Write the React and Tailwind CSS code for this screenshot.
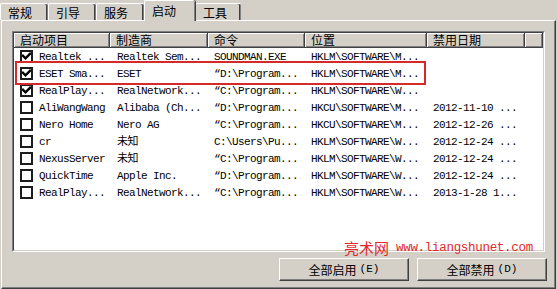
import React from "react";

const cjk = { fontFamily: "'Noto Sans CJK SC', 'Noto Sans', sans-serif" };
const mono = { fontFamily: "'Liberation Mono', 'Noto Sans CJK SC', monospace" };

const rows = [
  [true, "Realtek ...", "Realtek Sem...", "SOUNDMAN.EXE", "HKLM\\SOFTWARE\\M...", ""],
  [true, "ESET Sma...", "ESET", "\u201CD:\\Program...", "HKLM\\SOFTWARE\\M...", ""],
  [true, "RealPlay...", "RealNetwork...", "\u201CC:\\Program...", "HKLM\\SOFTWARE\\W...", ""],
  [false, "AliWangWang", "Alibaba (Ch...", "\u201CD:\\Program...", "HKCU\\SOFTWARE\\M...", "2012-11-10 ..."],
  [false, "Nero Home", "Nero AG", "\u201CC:\\Program...", "HKCU\\SOFTWARE\\M...", "2012-12-26 ..."],
  [false, "cr", "未知", "C:\\Users\\Pu...", "HKLM\\SOFTWARE\\W...", "2012-12-24 ..."],
  [false, "NexusServer", "未知", "\u201CC:\\Program...", "HKLM\\SOFTWARE\\W...", "2012-12-24 ..."],
  [false, "QuickTime", "Apple Inc.", "\u201CD:\\Program...", "HKLM\\SOFTWARE\\W...", "2012-12-24 ..."],
  [false, "RealPlay...", "RealNetwork...", "\u201CC:\\Program...", "HKLM\\SOFTWARE\\W...", "2013-1-28 1..."],
];

const headers = ["启动项目", "制造商", "命令", "位置", "禁用日期", ""];

function Tab({ label, selected, w }) {
  if (selected) {
    return (
      <div
        className="relative z-10 -mb-px h-[21px] bg-[#d4d0c8] border-l border-t border-white rounded-tl-[2px] rounded-tr-[2px] shadow-[inset_-1px_0_0_#808080,1px_0_0_#404040] flex items-start pl-[7px] pt-[3px] text-[12px] leading-[14px] text-black"
        style={{ ...cjk, width: w }}
      >
        {label}
      </div>
    );
  }
  return (
    <div
      className="h-[17px] bg-[#d4d0c8] border-l border-t border-white rounded-tl-[2px] rounded-tr-[2px] shadow-[inset_-1px_0_0_#808080,inset_-2px_0_0_#404040] flex items-start pl-[7px] pt-[2px] text-[12px] leading-[14px] text-black"
      style={{ ...cjk, width: w }}
    >
      {label}
    </div>
  );
}

function Check({ checked }) {
  return (
    <div className="w-[13px] h-[13px] border-2 border-[#1c1c1c] bg-white shrink-0 flex items-center justify-center">
      {checked && (
        <svg width="9" height="9" viewBox="0 0 9 9">
          <path d="M1 3.8 L3.5 6.3 L8 1.8" fill="none" stroke="#000" strokeWidth="2.4" strokeLinecap="square" />
        </svg>
      )}
    </div>
  );
}

function Button({ children, hot }) {
  return (
    <div className="w-[130px] h-[23px] bg-[#d4d0c8] border-t border-l border-white border-r border-b border-r-[#404040] border-b-[#404040] shadow-[inset_-1px_-1px_0_#808080] flex items-center justify-center text-[12px] text-black" style={cjk}>
      <span>{children}</span>
      <span className="ml-[3px] text-[11px]" style={mono}>({hot})</span>
    </div>
  );
}

const gridCols = "grid grid-cols-[96px_98px_97px_122px_98px_18px]";

export default function App() {
  return (
    <div className="relative w-[557px] h-[289px] bg-[#d4d0c8] overflow-hidden flex flex-col">
      <div className="h-[20px] flex items-end shrink-0">
        <Tab label="常规" w={48} />
        <Tab label="引导" w={48} />
        <Tab label="服务" w={48} />
        <Tab label="启动" w={51} selected />
        <Tab label="工具" w={46} />
      </div>
      <div className="ml-px w-[555px] flex-1 border-l border-t border-white border-r border-b border-r-[#404040] border-b-[#404040] shadow-[inset_-1px_-1px_0_#808080] flex flex-col">
        <div className="ml-[10px] mt-[10px] w-[533px] h-[221px] border border-t-[#808080] border-l-[#808080] border-r-white border-b-white">
          <div className="w-full h-full border border-t-[#404040] border-l-[#404040] border-r-[#d4d0c8] border-b-[#d4d0c8] bg-white overflow-hidden">
            <div className={gridCols + " h-[15px]"}>
              {headers.map((h, i) => (
                <div
                  key={i}
                  className="bg-[#d4d0c8] border-r border-b border-[#404040] shadow-[inset_1px_1px_0_#fff,inset_-1px_-1px_0_#808080] pl-[6px] flex items-center text-[12px] leading-[12px] text-black whitespace-nowrap"
                  style={cjk}
                >
                  {h}
                </div>
              ))}
            </div>
            {rows.map((r, i) => (
              <div key={i} className={gridCols + " h-[17px] items-center text-[11px] leading-[14px] tracking-[-0.6px] text-black"} style={mono}>
                <div className="flex items-center pl-[6px] gap-[6px] whitespace-nowrap">
                  <Check checked={r[0]} />
                  <span>{r[1]}</span>
                </div>
                <div className="pl-[7px] whitespace-nowrap">{r[2]}</div>
                <div className="pl-[6px] whitespace-nowrap">{r[3]}</div>
                <div className="pl-[6px] whitespace-nowrap">{r[4]}</div>
                <div className="pl-[6px] whitespace-nowrap">{r[5]}</div>
                <div />
              </div>
            ))}
          </div>
        </div>
        <div className="mt-[6px] flex justify-end gap-[8px] pr-[8px]">
          <Button hot="E">全部启用</Button>
          <Button hot="D">全部禁用</Button>
        </div>
      </div>

      {/* red highlight over the ESET row */}
      <div className="absolute left-[15px] top-[61px] w-[411px] h-[24px] border-2 border-[#d42a2a] pointer-events-none" />

      {/* watermark */}
      <div className="absolute left-[344px] top-[239px] flex items-center text-[#e02a2a] whitespace-nowrap pointer-events-none">
        <span className="text-[15px] leading-[18px]" style={cjk}>亮术网</span>
        <span className="ml-[7px] text-[12.5px] leading-[18px] tracking-[-0.3px]" style={mono}>www.liangshunet.com</span>
      </div>
    </div>
  );
}
